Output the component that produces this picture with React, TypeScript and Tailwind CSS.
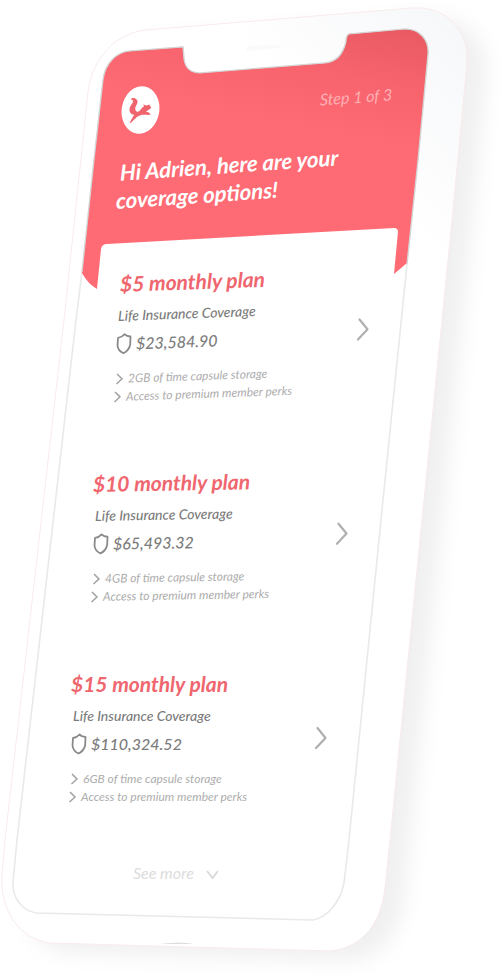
import React from "react";

type Plan = {
  price: string;
  amount: string;
  perks: string[];
  pose: string;
  titlePose: string;
};

const plans: Plan[] = [
  {
    price: "$5",
    amount: "$23,584.90",
    perks: ["2GB of time capsule storage", "Access to premium member perks"],
    pose: "ml-[116px] mr-[131px] -skew-y-2",
    titlePose: "ml-1",
  },
  {
    price: "$10",
    amount: "$65,493.32",
    perks: ["4GB of time capsule storage", "Access to premium member perks"],
    pose: "ml-[93px] mr-[152px] -skew-y-1",
    titlePose: "ml-0",
  },
  {
    price: "$15",
    amount: "$110,324.52",
    perks: ["6GB of time capsule storage", "Access to premium member perks"],
    pose: "ml-[71px] mr-[173px] skew-y-0",
    titlePose: "ml-0",
  },
];

const BODY =
  "M146 30 L412 8 C446 6 470 30 467 64 L454 200 L424 500 L390 840 L385 888 C381 924 362 948 330 951 L50 943 C22 940 -1 912 2 874 L5 840 L64 320 L88 92 C92 58 116 33 146 30 Z";

const SCREEN =
  "M130 51 L183 47 L184 59 C185 68 191 73 200 73 L325 63 C336 62 343 54 346 42 C346 38 347 35 349 34 L405 29 C420 29 429 40 428 54 L418 160 L407 264 L383 500 L357 760 L349 840 L344 883 C340 902 328 917 313 920 L36 913 C22 910 12 898 13 882 L17 840 L76 320 L82 272 L94 160 L103 80 C105 64 116 52 130 51 Z";

const HEADER =
  "M130 51 L183 47 L184 59 C185 68 191 73 200 73 L325 63 C336 62 343 54 346 42 C346 38 347 35 349 34 L405 29 C420 29 429 40 428 54 L418 160 L407 263 L394 274 L398 232 Q398 228 394 228 L107 244 Q102 244 101 249 L97 289 Q88 284 82 273 L94 160 L103 80 C105 64 116 52 130 51 Z";

function Phone() {
  return (
    <svg
      viewBox="0 0 500 974"
      className="pointer-events-none absolute inset-x-0 top-0 w-full"
      aria-hidden="true"
    >
      <defs>
        <filter id="soft" x="-20%" y="-20%" width="140%" height="140%">
          <feGaussianBlur stdDeviation="10" />
        </filter>
        <linearGradient id="coral" gradientUnits="userSpaceOnUse" x1="395" y1="25" x2="370" y2="145">
          <stop offset="0" stopColor="#e85a63" />
          <stop offset="0.5" stopColor="#f8646d" />
          <stop offset="1" stopColor="#ff6b74" />
        </linearGradient>
        <linearGradient id="shell" gradientUnits="userSpaceOnUse" x1="440" y1="20" x2="320" y2="130">
          <stop offset="0" stopColor="#f7f8fa" />
          <stop offset="1" stopColor="#ffffff" />
        </linearGradient>
      </defs>
      <path d={BODY} transform="translate(19 10)" fill="#000000" fillOpacity="0.06" filter="url(#soft)" />
      <path d={BODY} fill="url(#shell)" stroke="#faeaeb" strokeWidth="1" />
      <path d={SCREEN} fill="#ffffff" stroke="#e8e9e9" strokeWidth="1.6" />
      <path d={HEADER} fill="url(#coral)" />
      <path
        d="M82 272 L94 160 L103 80 C105 64 116 52 130 51 L183 47 L184 59 C185 68 191 73 200 73 L325 63 C336 62 343 54 346 42 C346 38 347 35 349 34 L405 29 C420 29 429 40 428 54 L418 160 L407 264"
        fill="none"
        stroke="#d3d5d5"
        strokeWidth="1.2"
      />
      <path d="M246 47 Q262 44 282 45 L280 48 Q262 49 247 51 Z" fill="#fafafa" />
      <path d="M160 944 Q180 941 194 944 Z" fill="#dedede" />
    </svg>
  );
}

function Logo() {
  return (
    <svg viewBox="0 0 40 50" className="h-[50px] w-10" role="img" aria-label="Squirrel">
      <ellipse cx="20.500" cy="25" rx="18.800" ry="23.800" transform="rotate(10 20.5 25)" fill="#ffffff" />
      <path
        transform="translate(-60.7 -85.5) scale(0.33333)"
        d="M214 299 C219 293 231 294 234 303 C237 312 229 318 228 325 C227 333 231 338 236 337 C245 334 245 325 254 321 L252 315 L262 318 L270 315 L273 320 L276 325 L269 331 L260 336 C266 337 272 340 274 346 C264 347 254 345 244 347 C232 350 224 361 214 371 L212 369 C216 360 221 352 225 346 C214 345 209 338 211 328 C212 318 222 312 221 304 C220 300 216 300 214 299 Z"
        fill="#f0656d"
      />
    </svg>
  );
}

function Shield() {
  return (
    <svg viewBox="0 0 16 22" className="h-[22px] w-4" aria-hidden="true">
      <path
        d="M8.500 1.500 Q11 4 14.500 4 L14.200 12 Q13 18 7.500 20.500 Q2 18 1.500 12.500 L2 5 Q6 4.500 8.500 1.500 Z"
        fill="none"
        stroke="#8a8a8a"
        strokeWidth="1.800"
        strokeLinejoin="round"
      />
    </svg>
  );
}

function PlanCard({ plan }: { plan: Plan }) {
  return (
    <article className={`flex origin-left items-center justify-between ${plan.pose}`}>
      <div>
        <h2 className={`text-[21px] leading-7 font-bold text-[#ef666e] ${plan.titlePose}`}>
          {plan.price} monthly plan
        </h2>
        <p className="mt-2 ml-0.5 text-sm leading-5 font-medium text-[#7c7c7c]">Life Insurance Coverage</p>
        <p className="mt-1 flex items-center gap-1 text-base leading-7 font-medium text-[#7c7c7c]">
          <Shield />
          {plan.amount}
        </p>
        <ul className="mt-3 text-xs leading-[18px] text-[#adadad]">
          {plan.perks.map((perk, i) => (
            <li key={perk} className={i === 0 ? "flex items-center gap-1.5" : "-ml-0.5 flex items-center gap-1.5"}>
              <svg viewBox="0 0 6 12" className="h-3 w-1.5 overflow-visible" aria-hidden="true">
                <path d="M1 1 L6 6 L0.500 11" fill="none" stroke="#a3a3a3" strokeWidth="1.500" />
              </svg>
              {perk}
            </li>
          ))}
        </ul>
      </div>
      <button type="button" aria-label={`Choose the ${plan.price} plan`} className="cursor-pointer">
        <svg viewBox="0 0 13 24" className="h-6 w-[13px]" aria-hidden="true">
          <path
            d="M3.500 2 L11.500 12 L2 22"
            fill="none"
            stroke="#afafaf"
            strokeWidth="2.200"
            strokeLinecap="round"
            strokeLinejoin="round"
          />
        </svg>
      </button>
    </article>
  );
}

export default function App() {
  return (
    <div className="overflow-hidden bg-white">
      <main className="relative mx-auto w-full max-w-[500px] pb-[90px] font-['Lato','Open_Sans',sans-serif] italic">
        <Phone />
        <div className="relative">
          <header className="pt-[85px] pl-[116px]">
            <div className="mr-[108px] ml-1 flex items-start justify-between">
              <Logo />
              <p className="-skew-y-4 text-base leading-6 text-[#ffb0b5]">Step 1 of 3</p>
            </div>
            <h1 className="mt-6 w-fit origin-left -skew-y-4 text-[22px] leading-7 font-bold text-white">
              <span className="ml-1">Hi Adrien, here are your</span>
              <br />
              coverage options!
            </h1>
          </header>
          <section aria-label="Coverage options" className="mt-[55px] flex flex-col gap-16">
            {plans.map((plan) => (
              <PlanCard key={plan.price} plan={plan} />
            ))}
          </section>
          <button
            type="button"
            className="mt-[55px] ml-[133px] flex cursor-pointer items-center gap-3 text-base leading-6 text-[#dcdcdc] italic"
          >
            See more
            <svg viewBox="0 0 13 10" className="mt-1 h-2.5 w-[13px]" aria-hidden="true">
              <path d="M1 1 L6.500 8 L12 1" fill="none" stroke="#d9d9d9" strokeWidth="1.800" />
            </svg>
          </button>
        </div>
      </main>
    </div>
  );
}
